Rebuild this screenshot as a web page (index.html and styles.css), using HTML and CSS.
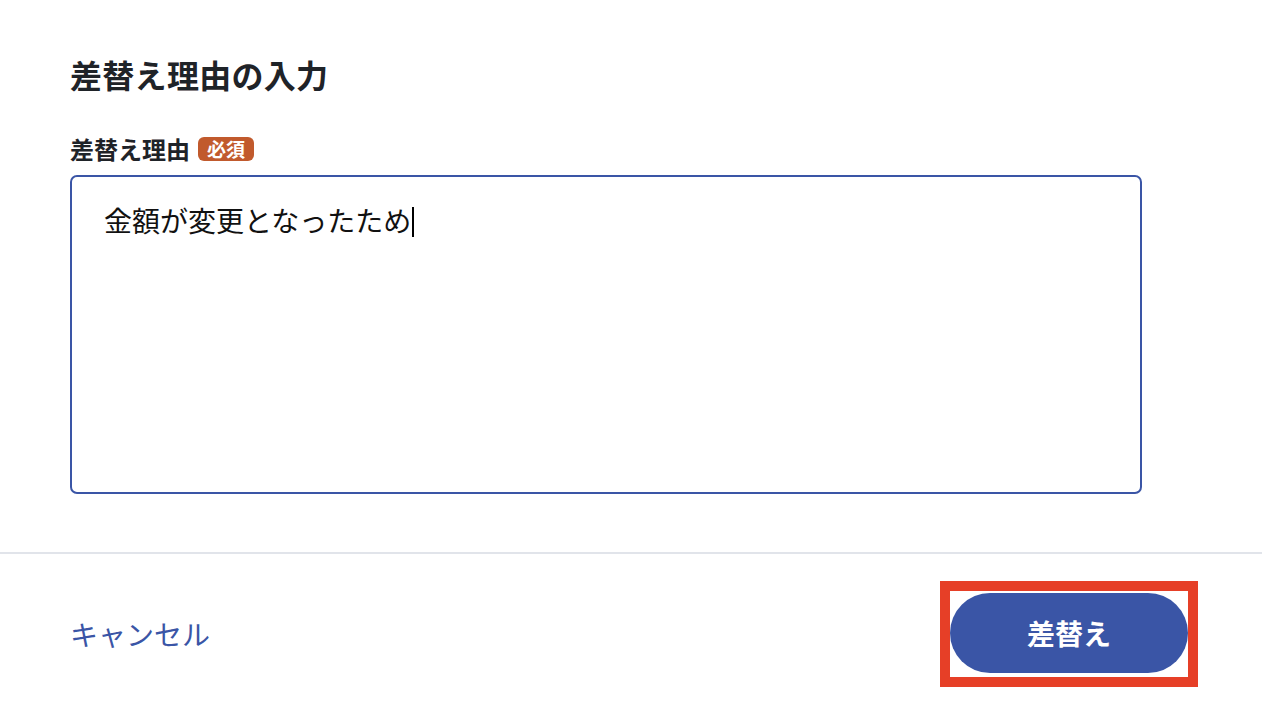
FILE: index.html
```html
<!DOCTYPE html>
<html lang="ja">
<head>
<meta charset="utf-8">
<title>差替え理由の入力</title>
<link rel="stylesheet" href="styles.css">
</head>
<body>
<div class="dialog">
  <div class="dialog-body">
    <h1 class="title">差替え理由の入力</h1>
    <div class="field">
      <div class="label-row">
        <span class="label">差替え理由</span>
        <span class="badge">必須</span>
      </div>
      <div class="textarea">金額が変更となったため<span class="caret"></span></div>
    </div>
  </div>
  <div class="dialog-footer">
    <a class="cancel" href="#">キャンセル</a>
    <div class="highlight">
      <button class="primary" type="button">差替え</button>
    </div>
  </div>
</div>
</body>
</html>
```
FILE: styles.css
```css
* { box-sizing: border-box; }
html, body {
  margin: 0;
  padding: 0;
  background: #ffffff;
}
body {
  font-family: "Noto Sans CJK JP", "Noto Sans", sans-serif;
  color: #1f2328;
  width: 1262px;
  height: 704px;
  overflow: hidden;
}
.dialog {
  display: flex;
  flex-direction: column;
}
.dialog-body {
  padding: 54px 120px 58px 70px;
}
.title {
  margin: 0;
  font-size: 32px;
  line-height: 40px;
  font-weight: 700;
  color: #1f2328;
  letter-spacing: 0.3px;
}
.field {
  margin-top: 39px;
  display: flex;
  flex-direction: column;
  gap: 10px;
}
.label-row {
  display: flex;
  align-items: center;
  gap: 8px;
  height: 32px;
}
.label {
  font-size: 24px;
  line-height: 32px;
  font-weight: 700;
  color: #1f2328;
}
.badge {
  display: inline-flex;
  align-items: center;
  justify-content: center;
  width: 56px;
  height: 24px;
  border-radius: 6px;
  background: #c15a2d;
  color: #ffffff;
  font-size: 19px;
  font-weight: 700;
  font-style: oblique 6deg;
  line-height: 24px;
}
.textarea {
  width: 1072px;
  height: 319px;
  border: 2px solid #3a55a6;
  border-radius: 7px;
  padding: 23px 32px;
  font-size: 28px;
  line-height: 40px;
  color: #111111;
}
.caret {
  display: inline-block;
  width: 1.5px;
  height: 30px;
  background: #000000;
  vertical-align: -5px;
  margin-left: 1px;
}
.dialog-footer {
  border-top: 2px solid #e1e4ea;
  display: flex;
  justify-content: space-between;
  align-items: center;
  padding: 27px 64px 0 70px;
}
.cancel {
  font-size: 28px;
  line-height: 40px;
  color: #3a55a6;
  text-decoration: none;
}
.highlight {
  border: 10px solid #e63f27;
  padding: 2px 0 4px;
  width: 258px;
}
.primary {
  display: block;
  width: 238px;
  height: 80px;
  border: none;
  border-radius: 40px;
  background: #3a55a6;
  color: #ffffff;
  font-family: "Noto Sans CJK JP", "Noto Sans", sans-serif;
  font-size: 28px;
  font-weight: 700;
  padding: 0;
  cursor: pointer;
}
```
